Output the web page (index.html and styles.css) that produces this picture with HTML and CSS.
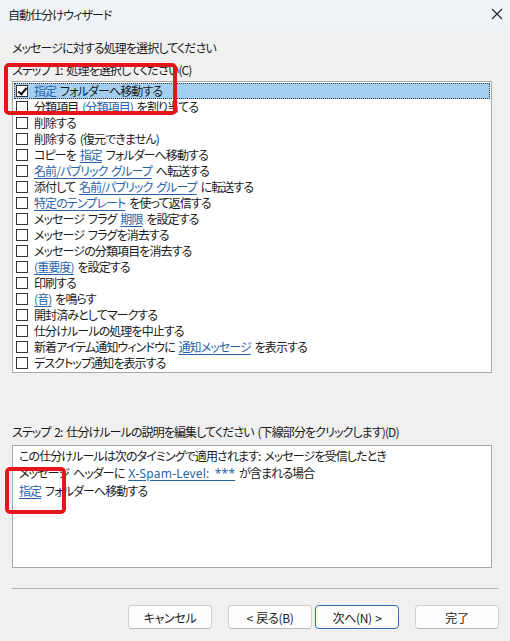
FILE: index.html
```html
<!DOCTYPE html>
<html lang="ja">
<head>
    <meta charset="UTF-8">
    <title>自動仕分けウィザード</title>
    <link rel="stylesheet" href="styles.css">
</head>
<body>
    <div class="window">
        <!-- Title bar -->
        <div class="titlebar">
            <span>自動仕分けウィザード</span>
            <svg class="close" width="12" height="12" viewBox="0 0 12 12">
                <path d="M1 1 L11 11 M11 1 L1 11" stroke="#222" stroke-width="1.1" fill="none"/>
            </svg>
        </div>

        <div class="content">
            <div class="prompt">メッセージに対する処理を選択してください</div>
            <div class="label step1">ステップ 1: 処理を選択してください(C)</div>

            <div class="listbox">
                <div class="row selected"><span class="check on"></span><span><a>指定</a> フォルダーへ移動する</span></div>
                <div class="row"><span class="check"></span><span>分類項目 <a>(分類項目)</a> を割り当てる</span></div>
                <div class="row"><span class="check"></span><span>削除する</span></div>
                <div class="row"><span class="check"></span><span>削除する (復元できません)</span></div>
                <div class="row"><span class="check"></span><span>コピーを <a>指定</a> フォルダーへ移動する</span></div>
                <div class="row"><span class="check"></span><span><a>名前/パブリック グループ</a> へ転送する</span></div>
                <div class="row"><span class="check"></span><span>添付して <a>名前/パブリック グループ</a> に転送する</span></div>
                <div class="row"><span class="check"></span><span><a>特定のテンプレート</a> を使って返信する</span></div>
                <div class="row"><span class="check"></span><span>メッセージ フラグ <a>期限</a> を設定する</span></div>
                <div class="row"><span class="check"></span><span>メッセージ フラグを消去する</span></div>
                <div class="row"><span class="check"></span><span>メッセージの分類項目を消去する</span></div>
                <div class="row"><span class="check"></span><span><a>(重要度)</a> を設定する</span></div>
                <div class="row"><span class="check"></span><span>印刷する</span></div>
                <div class="row"><span class="check"></span><span><a>(音)</a> を鳴らす</span></div>
                <div class="row"><span class="check"></span><span>開封済みとしてマークする</span></div>
                <div class="row"><span class="check"></span><span>仕分けルールの処理を中止する</span></div>
                <div class="row"><span class="check"></span><span>新着アイテム通知ウィンドウに <a>通知メッセージ</a> を表示する</span></div>
                <div class="row"><span class="check"></span><span>デスクトップ通知を表示する</span></div>
            </div>

            <div class="label step2">ステップ 2: 仕分けルールの説明を編集してください (下線部分をクリックします)(D)</div>
            <div class="desc">
                <div>この仕分けルールは次のタイミングで適用されます: メッセージを受信したとき</div>
                <div>メッセージ ヘッダーに <a class="latin">X-Spam-Level: ***</a> が含まれる場合</div>
                <div><a>指定</a> フォルダーへ移動する</div>
            </div>

            <div class="separator"></div>

            <div class="buttons">
                <button class="btn">キャンセル</button>
                <div class="pair">
                    <button class="btn">&lt; 戻る(B)</button>
                    <button class="btn default">次へ(N) &gt;</button>
                </div>
                <button class="btn">完了</button>
            </div>
        </div>

        <!-- annotation marks -->
        <div class="mark mark-top"></div>
        <div class="mark mark-bottom"></div>
    </div>
</body>
</html>
```

FILE: styles.css
```css
/* Global */
* {
    margin: 0;
    padding: 0;
    box-sizing: border-box;
}

body {
    width: 510px;
    height: 641px;
    overflow: hidden;
    background: #f0f0f0;
    font-family: "Noto Sans CJK JP", "Noto Sans", sans-serif;
    font-size: 12px;
    font-feature-settings: "palt";
    letter-spacing: -0.9px;
    word-spacing: 2px;
    color: #1a1a1a;
}

.window {
    position: relative;
    width: 510px;
    height: 641px;
    background: #f0f0f0;
}

.titlebar {
    height: 30px;
    background: #eef3f8;
    display: flex;
    align-items: center;
    justify-content: space-between;
    padding: 0 8px 2px 8px;
    font-size: 12px;
}

.titlebar .close {
    margin-right: -1px;
}

.content {
    padding: 0 11px 0 12px;
}

.prompt {
    margin-top: 10px;
    line-height: 16px;
}

.label {
    line-height: 16px;
}

.step1 {
    margin-top: 6px;
}

a {
    color: #2a63a8;
    text-decoration: underline;
    text-underline-offset: 2px;
}

a.latin {
    font-family: "Noto Sans", sans-serif;
    letter-spacing: 0.2px;
}

/* Action list */
.listbox {
    margin-top: 3px;
    width: 480px;
    height: 292px;
    background: #fff;
    border: 1px solid #a8a8a8;
    padding: 1px 1px 0 1px;
}

.row {
    height: 16px;
    line-height: 16px;
    display: flex;
    align-items: center;
    gap: 6px;
    padding-left: 2px;
    white-space: nowrap;
}

.row.selected {
    background: #a5cff1;
    outline: 1px dotted #333;
    outline-offset: -1px;
}

.check {
    width: 12px;
    height: 12px;
    border: 1px solid #333;
    background: #fff;
    flex: none;
    position: relative;
}

.check.on::after {
    content: "";
    position: absolute;
    left: 3px;
    top: 0px;
    width: 3px;
    height: 7px;
    border-right: 2px solid #111;
    border-bottom: 2px solid #111;
    transform: rotate(40deg);
}

.step2 {
    margin-top: 51px;
}

/* Rule description */
.desc {
    margin-top: 5px;
    width: 480px;
    height: 123px;
    background: #fff;
    border: 1px solid #a8a8a8;
    padding: 1px 6px 0 6px;
    line-height: 17px;
    white-space: nowrap;
}

.separator {
    margin-top: 20px;
    width: 486px;
    height: 1px;
    background: #b4b4b4;
}

.buttons {
    margin-top: 16px;
    display: flex;
    justify-content: flex-end;
    gap: 16px;
}

.pair {
    display: flex;
    gap: 3px;
}

.btn {
    width: 84px;
    height: 24px;
    background: #fdfdfd;
    border: 1px solid #d0d0d0;
    border-bottom-color: #bcbcbc;
    border-radius: 4px;
    font-family: "Noto Sans CJK JP", "Noto Sans", sans-serif;
    font-size: 12px;
    font-feature-settings: "palt";
    letter-spacing: -0.3px;
    word-spacing: 1px;
    color: #1a1a1a;
}

.btn.default {
    border: 1px solid #2f6fb0;
}

/* Red annotation frames */
.mark {
    position: absolute;
    border: 4px solid #e8141c;
    border-radius: 5px;
}

.mark-top {
    left: 4px;
    top: 63px;
    width: 173px;
    height: 52px;
}

.mark-bottom {
    left: 5px;
    top: 467px;
    width: 61px;
    height: 47px;
}
```
